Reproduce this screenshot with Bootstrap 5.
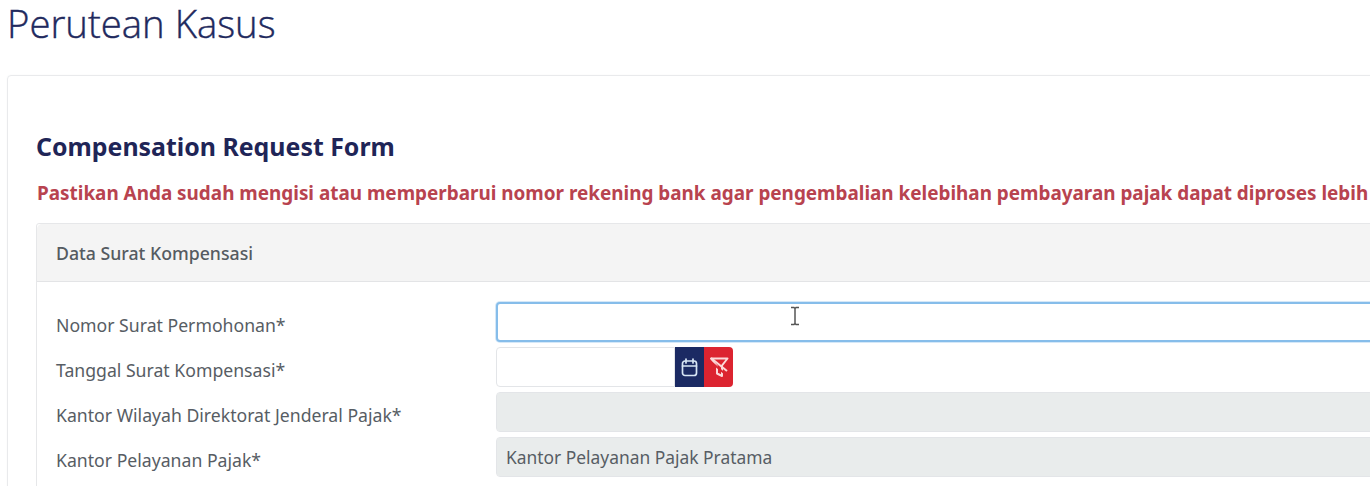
<!DOCTYPE html>
<html lang="en">
<head>
  <meta charset="UTF-8">
  <meta name="viewport" content="width=device-width, initial-scale=1.0">
  <title>Perutean Kasus</title>
  <link href="https://cdn.jsdelivr.net/npm/bootstrap@5.3.1/dist/css/bootstrap.min.css" rel="stylesheet">
  <style>
    html, body {
      height: 486px;
      overflow: hidden;
    }
    body {
      background-color: #fff;
      font-family: "Noto Sans", sans-serif;
      color: #495057;
    }
    .page-wrap {
      width: 1500px;
      padding: 0 0 0 7px;
    }
    .page-title {
      font-family: "Open Sans", sans-serif;
      font-size: 38.3px;
      font-weight: 300;
      -webkit-text-stroke: .4px #1f2a5e;
      line-height: 46px;
      color: #1f2a5e;
      margin: 0 0 29px 0;
    }
    .outer-panel {
      border: 1px solid #e9eaec;
      border-radius: 4px;
      padding: 50px 28px 60px;
      box-shadow: 0 0 2px rgba(0, 0, 0, .04);
    }
    .form-heading {
      font-size: 24.9px;
      font-weight: 700;
      line-height: 40px;
      color: #1f2557;
      margin: 0 0 15px;
    }
    .warn-text {
      font-size: 18.9px;
      font-weight: 700;
      line-height: 24px;
      color: #b8434f;
      white-space: nowrap;
      margin: 0 0 18px 1px;
    }
    .data-card {
      border-color: #e6e7e9;
      border-radius: 3px;
    }
    .data-card .card-header {
      background-color: #f4f4f4;
      border-bottom-color: #e3e4e6;
      font-size: 17.7px;
      font-weight: 500;
      line-height: 24px;
      color: #555b61;
      padding: 17px 19px 16px;
    }
    .data-card .card-body {
      padding: 20px 19px 40px;
    }
    .field-row {
      display: flex;
      margin-bottom: 5px;
    }
    .field-label {
      width: 440px;
      flex: none;
      font-size: 17.65px;
      line-height: 24px;
      padding-top: 11px;
      color: #575d64;
    }
    .field-input {
      height: 40px;
      font-size: 17.4px;
      color: #575d64;
      border-color: #e3e5e8;
      border-radius: 4px;
      padding: 6px 9px;
    }
    .field-input:disabled, .field-input[readonly] {
      background-color: #e9ecec;
      opacity: 1;
    }
    .field-focus {
      border: 2px solid #86bdea;
      box-shadow: 0 0 0 1px rgba(134, 189, 234, .35);
    }
    .date-group {
      width: 237px;
    }
    .date-group .field-input {
      border-radius: 4px 0 0 4px;
    }
    .date-btn {
      width: 29px;
      height: 40px;
      padding: 0;
      border: 0;
      border-radius: 0;
      display: flex;
      align-items: center;
      justify-content: center;
    }
    .date-btn-navy {
      background-color: #1b2a63;
    }
    .date-btn-red {
      background-color: #dc2430;
      border-radius: 0 4px 4px 0;
    }
    .text-cursor {
      position: absolute;
      left: 789px;
      top: 306px;
    }
  </style>
</head>
<body>
  <div class="page-wrap">
    <h1 class="page-title">Perutean Kasus</h1>
    <div class="outer-panel">
      <h2 class="form-heading">Compensation Request Form</h2>
      <p class="warn-text">Pastikan Anda sudah mengisi atau memperbarui nomor rekening bank agar pengembalian kelebihan pembayaran pajak dapat diproses lebih</p>
      <div class="card data-card">
        <div class="card-header">Data Surat Kompensasi</div>
        <div class="card-body">
          <div class="field-row">
            <label class="field-label">Nomor Surat Permohonan*</label>
            <input type="text" class="form-control field-input field-focus">
          </div>
          <div class="field-row">
            <label class="field-label">Tanggal Surat Kompensasi*</label>
            <div class="d-flex date-group">
              <input type="text" class="form-control field-input">
              <button type="button" class="btn date-btn date-btn-navy flex-shrink-0" aria-label="Pilih tanggal">
                <svg width="17" height="19" viewBox="0 0 17 19" fill="none" stroke="#d8e6f5" stroke-width="1.7" stroke-linecap="round" stroke-linejoin="round"><rect x="1.5" y="3" width="14" height="14.5" rx="2.5"/><path d="M1.5 8h14M5 1v4M12 1v4"/></svg>
              </button>
              <button type="button" class="btn date-btn date-btn-red flex-shrink-0" aria-label="Hapus filter">
                <svg width="20" height="22" viewBox="0 0 20 22" fill="none" stroke-linejoin="round"><path d="M2 2.5h16.5L13 9.5V20l-5-2.5V10.5z" stroke="#fbd9d9" stroke-width="2"/><path d="M1 5l14 12" stroke="#dc2430" stroke-width="2"/><path d="M2 2l16 13" stroke="#fbd9d9" stroke-width="2"/></svg>
              </button>
            </div>
          </div>
          <div class="field-row">
            <label class="field-label">Kantor Wilayah Direktorat Jenderal Pajak*</label>
            <input type="text" class="form-control field-input" disabled>
          </div>
          <div class="field-row">
            <label class="field-label">Kantor Pelayanan Pajak*</label>
            <input type="text" class="form-control field-input" value="Kantor Pelayanan Pajak Pratama" disabled>
          </div>
        </div>
      </div>
    </div>
  </div>
  <svg class="text-cursor" width="12" height="20" viewBox="0 0 12 20" fill="none" stroke="#555" stroke-width="1.5"><path d="M2 1.5h3l1 1 1-1h3M6 2.5v15M2 18.5h3l1-1 1 1h3"/></svg>
</body>
</html>
